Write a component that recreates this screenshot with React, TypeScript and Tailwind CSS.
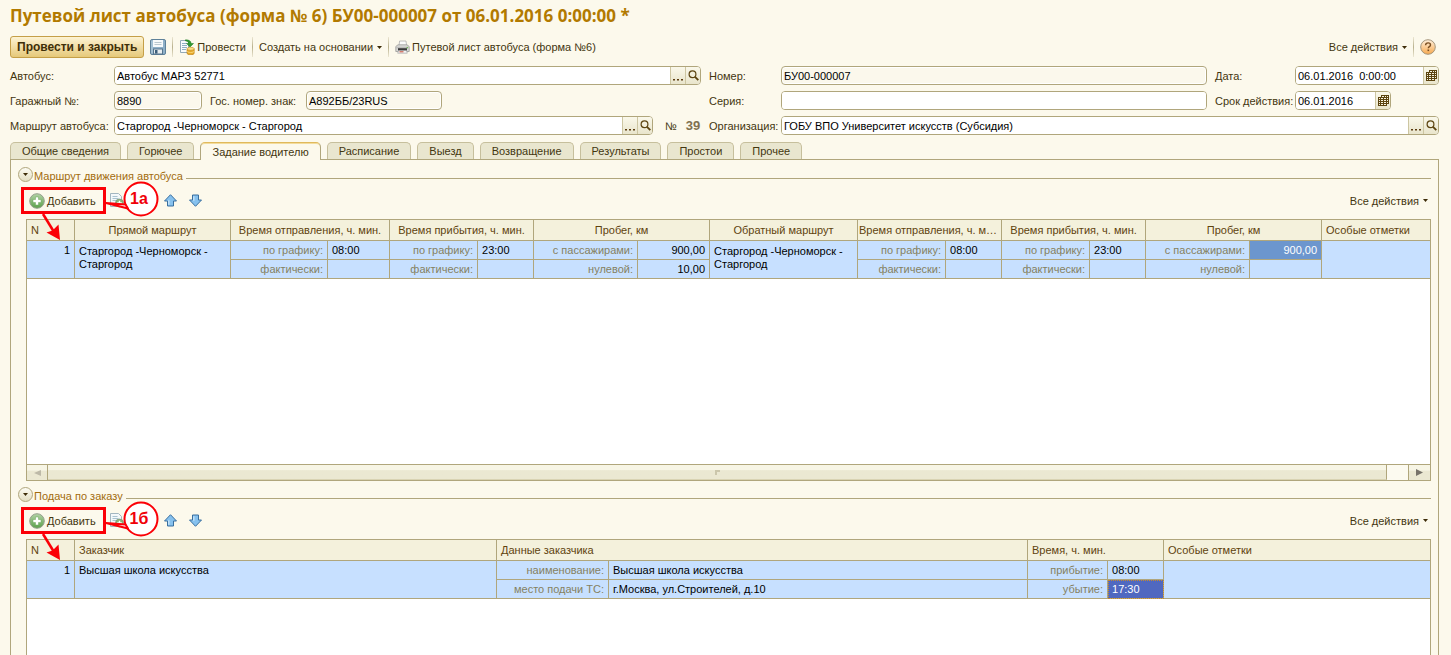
import React, { useState } from "react";

/* ---------- icons ---------- */

function SaveIcon() {
  return (
    <svg width="16" height="16" viewBox="0 0 16 16" aria-hidden="true">
      <rect x="0.5" y="0.5" width="15" height="15" rx="1.5" fill="#8fb0c8" stroke="#5f8199" />
      <rect x="1.5" y="1.5" width="1" height="13" fill="#b7cfdf" />
      <rect x="3" y="1" width="10" height="7" fill="#f7fafb" />
      <path d="M4.5 3.5h7M4.5 5.5h7" stroke="#b9c7cf" />
      <rect x="3.5" y="10" width="9" height="5" fill="#e7edf0" stroke="#56758d" />
      <rect x="5" y="11" width="2.5" height="3.5" fill="#3d5f7b" />
    </svg>
  );
}

function PostIcon() {
  return (
    <svg width="16" height="16" viewBox="0 0 16 16" aria-hidden="true">
      <path d="M1.5 1.5h8v12h-8z" fill="#f8fbfc" stroke="#93aab8" />
      <path d="M3 4.5h5M3 6.5h5M3 8.5h5M3 10.5h4" stroke="#8fb0c4" />
      <path d="M6.5 0.8c3.6 0 5.6 1.2 5.6 3.7h2.4L11 8 7.6 4.5h2c0-1.6-1-2.4-3.1-2.6z" fill="#2e9a2f" stroke="#187518" strokeWidth="0.5" />
      <path d="M8 9.8v4.4c0 .9 1.6 1.6 3.6 1.6s3.6-.7 3.6-1.6V9.8z" fill="#e5a92b" stroke="#b87c14" strokeWidth="0.6" />
      <ellipse cx="11.6" cy="9.8" rx="3.6" ry="1.5" fill="#fbe08a" stroke="#c48a1c" strokeWidth="0.6" />
      <path d="M8 12c0 .9 1.6 1.5 3.6 1.5s3.6-.6 3.6-1.5" fill="none" stroke="#fbe08a" strokeWidth="0.8" />
    </svg>
  );
}

function PrinterIcon() {
  return (
    <svg width="15" height="14" viewBox="0 0 15 14" aria-hidden="true">
      <path d="M4 5.5L4.600 1h6.400l.6 4.500z" fill="#fbfbfb" stroke="#b0b0b0" strokeWidth="0.8" />
      <path d="M0.800 6.500L3 4.800h9l2.200 1.700v5H0.800z" fill="#d9d9d7" stroke="#9b9b98" strokeWidth="0.8" />
      <path d="M1.200 6.800h12.600v1.600H1.200z" fill="#bdbdbb" />
      <path d="M3 8.200h9v2.600H3z" fill="#3a3a3a" />
      <path d="M3.500 10.500h8l.8 2.700H2.700z" fill="#f4f4f4" stroke="#9a9a9a" strokeWidth="0.6" />
      <rect x="4.500" y="11.300" width="4" height="1" fill="#c84a35" />
      <rect x="11.600" y="7.200" width="1.400" height="1" fill="#5bb23f" />
    </svg>
  );
}

function HelpIcon() {
  return (
    <svg width="16" height="16" viewBox="0 0 16 16" aria-hidden="true">
      <defs>
        <linearGradient id="help-fill" x1="0" y1="0" x2="0" y2="1">
          <stop offset="0" stopColor="#fff0dc" />
          <stop offset="1" stopColor="#f7a94f" />
        </linearGradient>
      </defs>
      <circle cx="8" cy="8" r="7.3" fill="url(#help-fill)" stroke="#a5967c" />
      <path d="M5.600 6.200c0-1.500 1-2.300 2.500-2.300s2.400.8 2.400 2c0 1.700-2.200 1.700-2.200 3.300" fill="none" stroke="#7a4f22" strokeWidth="1.4" />
      <rect x="7.500" y="10.500" width="1.600" height="1.600" fill="#7a4f22" />
    </svg>
  );
}

function SearchIcon() {
  return (
    <svg width="11" height="11" viewBox="0 0 11 11" aria-hidden="true">
      <circle cx="4.500" cy="4.300" r="3.400" fill="none" stroke="#5c4410" strokeWidth="1.2" />
      <path d="M7 6.800l3.300 3.400" stroke="#5c4410" strokeWidth="1.8" />
    </svg>
  );
}

function EllipsisIcon() {
  return (
    <svg width="11" height="11" viewBox="0 0 11 11" aria-hidden="true">
      <path d="M0 9h2v1.500H0zM4 9h2v1.500H4zM8 9h2v1.500H8z" fill="#5c3c10" />
    </svg>
  );
}

function CalendarIcon() {
  return (
    <svg width="11" height="11" viewBox="0 0 11 11" aria-hidden="true" shapeRendering="crispEdges">
      <path d="M3 0h8v9H9v2H0V2h3z" fill="#5c4410" />
      <path
        d="M4 1h2v1H4zM7 1h1v1H7zM9 1h1v1H9zM1 3h1v1H1zM3 3h2v1H3zM6 3h2v1H6zM1 5h1v1H1zM3 5h2v1H3zM6 5h2v1H6zM1 7h1v1H1zM3 7h2v1H3zM6 7h2v1H6zM1 9h1v1H1zM3 9h2v1H3zM6 9h2v1H6zM9 3h1v1H9zM9 5h1v1H9zM9 7h1v1H9z"
        fill="#f7f4e2"
      />
    </svg>
  );
}

function AddIcon() {
  return (
    <svg width="16" height="16" viewBox="0 0 16 16" aria-hidden="true">
      <defs>
        <linearGradient id="add-fill" x1="0" y1="0" x2="0" y2="1">
          <stop offset="0" stopColor="#b3d3a6" />
          <stop offset="1" stopColor="#5aa04a" />
        </linearGradient>
      </defs>
      <circle cx="8" cy="8" r="7.3" fill="url(#add-fill)" stroke="#95a08d" />
      <path d="M6.500 4h3v2.500H12v3H9.500V12h-3V9.500H4v-3h2.500z" fill="#fff" stroke="#6aa75b" strokeWidth="0.5" />
    </svg>
  );
}

function CopyIcon() {
  return (
    <svg width="14" height="15" viewBox="0 0 14 15" aria-hidden="true">
      <path d="M0.500 0.500h8l3 3v10h-11z" fill="#f4f8fa" stroke="#a3b6c0" />
      <path d="M2.500 3.500h5M2.500 5.500h6M2.500 7.500h4" stroke="#a9c3d0" />
      <circle cx="9.500" cy="10" r="4" fill="#86b778" stroke="#84967c" strokeWidth="0.8" />
      <path d="M9.500 7.700v4.600M7.200 10h4.600" stroke="#fff" strokeWidth="1.4" />
    </svg>
  );
}

function MoveIcon({ down = false }: { down?: boolean }) {
  return (
    <svg width="13" height="13" viewBox="0 0 13 13" aria-hidden="true">
      <path
        d={down ? "M3.500 1h6v5h3L6.500 12.300 0.500 6h3z" : "M3.500 12h6V7h3L6.500 0.700 0.500 7h3z"}
        fill="#86c1ee"
        stroke="#396f9f"
      />
      <path d={down ? "M4.800 2.200v4.500" : "M4.800 10.800V6.300"} stroke="#cfe9fb" strokeWidth="1.2" />
    </svg>
  );
}

function Caret() {
  return (
    <svg width="5" height="3" viewBox="0 0 5 3" aria-hidden="true">
      <path d="M0 0h5L2.500 3z" fill="#3d2c08" />
    </svg>
  );
}

/* ---------- small parts ---------- */

function Divider() {
  return <span className="h-5 w-px bg-linear-to-b from-[#ece7d3] via-[#b9b18e] to-[#ece7d3]" />;
}

function AllActions() {
  return (
    <button type="button" className="flex items-center gap-1">
      Все действия <Caret />
    </button>
  );
}

type FieldProps = {
  id: string;
  value: string;
  readOnly?: boolean;
  buttons?: "pick" | "date";
  className?: string;
};

function Field({ id, value, readOnly, buttons, className = "w-full" }: FieldProps) {
  const side =
    "flex h-full items-center justify-center border-l border-[#cdc6a2] bg-linear-to-b from-[#faf8ea] to-[#e9e5cc]";
  return (
    <div className={`flex h-[19px] min-w-0 overflow-hidden rounded-[4px] border border-[#b0a67c] bg-white ${className}`}>
      <input
        id={id}
        defaultValue={value}
        readOnly={readOnly}
        className={`min-w-0 flex-1 text-black outline-none ${
          readOnly ? "m-px rounded-[2px] bg-[#fbf8ec] px-px" : "bg-white px-[2px]"
        }`}
      />
      {buttons === "pick" && (
        <>
          <button type="button" aria-label="Выбрать" className={`${side} w-[15px]`}>
            <EllipsisIcon />
          </button>
          <button type="button" aria-label="Открыть" className={`${side} w-[15px]`}>
            <SearchIcon />
          </button>
        </>
      )}
      {buttons === "date" && (
        <button type="button" aria-label="Календарь" className={`${side} w-[15px]`}>
          <CalendarIcon />
        </button>
      )}
    </div>
  );
}

function Callout({ text }: { text: string }) {
  return (
    <svg
      className="pointer-events-none absolute left-0 top-0"
      width="150"
      height="80"
      viewBox="0 0 150 80"
      role="img"
      aria-label={text}
    >
      <rect x="4.500" y="21.500" width="82" height="24" fill="none" stroke="#fb0007" strokeWidth="3" />
      <path d="M25 47L36 65" stroke="#fb0007" strokeWidth="2.5" />
      <path d="M42 73L28.500 65.500L34.500 63.500L40.500 57.500z" fill="#fb0007" />
      <circle cx="123" cy="32" r="16.500" fill="#fff" stroke="#fb0007" strokeWidth="2" />
      <path d="M88 36L107.500 37.500L110 41.500z" fill="#fff" stroke="#fb0007" strokeWidth="2" strokeLinejoin="round" />
      <text
        x="121"
        y="37"
        textAnchor="middle"
        fill="#f00008"
        className="font-['Liberation_Sans',Arial,sans-serif] text-base font-bold"
      >
        {text}
      </text>
    </svg>
  );
}

function Section({
  title,
  callout,
  className = "",
  children,
}: {
  title: string;
  callout: string;
  className?: string;
  children: React.ReactNode;
}) {
  return (
    <section className={`relative flex flex-col ${className}`}>
      <div className="flex h-[15px] items-center gap-px">
        <button
          type="button"
          aria-label="Свернуть"
          className="flex size-[15px] shrink-0 items-center justify-center rounded-full border border-[#b0a67c] bg-linear-to-b from-[#fdfcf4] to-[#e3dec2]"
        >
          <Caret />
        </button>
        <h2 className="mt-[2px] whitespace-nowrap text-[#a26c0e]">{title}</h2>
        <span className="ml-[2px] mt-2 h-px flex-1 bg-[#b0a67c]" />
      </div>
      <div className="flex h-[37px] items-center pl-[11px]">
        <button type="button" className="flex items-center gap-[2px]">
          <AddIcon />
          Добавить
        </button>
        <button type="button" aria-label="Скопировать" className="ml-[14px]">
          <CopyIcon />
        </button>
        <button type="button" aria-label="Переместить вверх" className="ml-[40px]">
          <MoveIcon />
        </button>
        <button type="button" aria-label="Переместить вниз" className="ml-3">
          <MoveIcon down />
        </button>
        <div className="ml-auto pr-[3px]">
          <AllActions />
        </div>
      </div>
      {children}
      <Callout text={callout} />
    </section>
  );
}

/* ---------- tables ---------- */

const cell = "border-b border-r border-[#b0a67c] px-1 align-top";
const lastCell = "border-b border-[#b0a67c] px-1 align-top";
const head = "border-b border-r border-[#b0a67c] px-1 font-normal";
const groupHead = "truncate border-b border-r border-[#b0a67c] px-px font-normal";
const lastHead = "border-b border-[#b0a67c] px-1 font-normal";

function Hint({ children }: { children: React.ReactNode }) {
  return (
    <th scope="row" className={`${cell} whitespace-nowrap pt-px text-right font-normal leading-[17px] text-[#85805f]`}>
      {children}
    </th>
  );
}

function Value({
  children,
  right,
  tone = "plain",
}: {
  children?: React.ReactNode;
  right?: boolean;
  tone?: "plain" | "selected" | "focused";
}) {
  const tones = {
    plain: "",
    selected: "bg-[#6c96ce] text-white",
    focused: "bg-[#5068c0] text-white outline-1 -outline-offset-1 outline-dotted outline-[#c88a2c]",
  };
  return (
    <td className={`${cell} pt-px leading-[17px] ${right ? "text-right" : ""} ${tones[tone]}`}>{children}</td>
  );
}

function RouteTable() {
  return (
    <table className="w-full table-fixed border-separate border-spacing-0">
      <colgroup>
        <col className="w-[48px]" />
        <col className="w-[156px]" />
        <col className="w-[97px]" />
        <col className="w-[62px]" />
        <col className="w-[88px]" />
        <col className="w-[56px]" />
        <col className="w-[104px]" />
        <col className="w-[72px]" />
        <col className="w-[148px]" />
        <col className="w-[88px]" />
        <col className="w-[56px]" />
        <col className="w-[88px]" />
        <col className="w-[56px]" />
        <col className="w-[104px]" />
        <col className="w-[72px]" />
        <col />
      </colgroup>
      <thead>
        <tr className="h-[21px] bg-[#f4f1dc] text-[#5f430e]">
          <th className={`${head} text-left`}>N</th>
          <th className={groupHead}>Прямой маршрут</th>
          <th colSpan={2} className={groupHead}>Время отправления, ч. мин.</th>
          <th colSpan={2} className={groupHead}>Время прибытия, ч. мин.</th>
          <th colSpan={2} className={groupHead}>Пробег, км</th>
          <th className={groupHead}>Обратный маршрут</th>
          <th colSpan={2} className={groupHead}>Время отправления, ч. мин.</th>
          <th colSpan={2} className={groupHead}>Время прибытия, ч. мин.</th>
          <th colSpan={2} className={groupHead}>Пробег, км</th>
          <th className={`${lastHead} text-left`}>Особые отметки</th>
        </tr>
      </thead>
      <tbody className="bg-[#c7e0ff] text-black">
        <tr className="h-[19px]">
          <td rowSpan={2} className={`${cell} pt-px text-right leading-[17px]`}>1</td>
          <td rowSpan={2} className={`${cell} pt-1 leading-[13px]`}>Старгород -Черноморск - Старгород</td>
          <Hint>по графику:</Hint>
          <Value>08:00</Value>
          <Hint>по графику:</Hint>
          <Value>23:00</Value>
          <Hint>с пассажирами:</Hint>
          <Value right>900,00</Value>
          <td rowSpan={2} className={`${cell} pt-1 leading-[13px]`}>Старгород -Черноморск - Старгород</td>
          <Hint>по графику:</Hint>
          <Value>08:00</Value>
          <Hint>по графику:</Hint>
          <Value>23:00</Value>
          <Hint>с пассажирами:</Hint>
          <Value right tone="selected">900,00</Value>
          <td rowSpan={2} className={lastCell} />
        </tr>
        <tr className="h-[19px]">
          <Hint>фактически:</Hint>
          <Value />
          <Hint>фактически:</Hint>
          <Value />
          <Hint>нулевой:</Hint>
          <Value right>10,00</Value>
          <Hint>фактически:</Hint>
          <Value />
          <Hint>фактически:</Hint>
          <Value />
          <Hint>нулевой:</Hint>
          <Value />
        </tr>
      </tbody>
    </table>
  );
}

function OrdersTable() {
  return (
    <table className="w-full table-fixed border-separate border-spacing-0">
      <colgroup>
        <col className="w-[48px]" />
        <col className="w-[422px]" />
        <col className="w-[112px]" />
        <col className="w-[419px]" />
        <col className="w-[80px]" />
        <col className="w-[56px]" />
        <col />
      </colgroup>
      <thead>
        <tr className="h-[21px] bg-[#f4f1dc] text-left text-[#5f430e]">
          <th className={head}>N</th>
          <th className={head}>Заказчик</th>
          <th colSpan={2} className={head}>Данные заказчика</th>
          <th colSpan={2} className={head}>Время, ч. мин.</th>
          <th className={lastHead}>Особые отметки</th>
        </tr>
      </thead>
      <tbody className="bg-[#c7e0ff] text-black">
        <tr className="h-[19px]">
          <td rowSpan={2} className={`${cell} pt-px text-right leading-[17px]`}>1</td>
          <td rowSpan={2} className={`${cell} pt-px leading-[17px]`}>Высшая школа искусства</td>
          <Hint>наименование:</Hint>
          <Value>Высшая школа искусства</Value>
          <Hint>прибытие:</Hint>
          <Value>08:00</Value>
          <td rowSpan={2} className={lastCell} />
        </tr>
        <tr className="h-[19px]">
          <Hint>место подачи ТС:</Hint>
          <Value>г.Москва, ул.Строителей, д.10</Value>
          <Hint>убытие:</Hint>
          <Value tone="focused">17:30</Value>
        </tr>
      </tbody>
    </table>
  );
}

function ScrollBar() {
  const face = "bg-linear-to-b from-[#f7f5e5] from-35% to-[#ebe8d2] to-40%";
  return (
    <div className="mt-auto flex h-4 border-t border-[#b0a67c] bg-[#fcfaf0]">
      <button type="button" aria-label="Прокрутить влево" className={`flex w-[21px] items-center justify-center border-r border-[#b0a67c] ${face}`}>
        <svg width="7" height="6" viewBox="0 0 7 6" aria-hidden="true">
          <path d="M7 0v6L0 3z" fill="#bdb9a8" />
        </svg>
      </button>
      <div className={`flex flex-1 items-center justify-center border-b border-r border-b-[#d9d3b3] border-r-[#b0a67c] ${face}`}>
        <svg width="5" height="5" viewBox="0 0 5 5" aria-hidden="true">
          <path d="M0 0h5v2H2v3H0z" fill="#cbc6ab" />
        </svg>
      </div>
      <div className="w-[21px]" />
      <button type="button" aria-label="Прокрутить вправо" className={`flex w-[22px] items-center justify-center border-l border-[#b0a67c] ${face}`}>
        <svg width="7" height="7" viewBox="0 0 7 7" aria-hidden="true">
          <path d="M0 0v7L7 3.500z" fill="#77736a" />
        </svg>
      </button>
    </div>
  );
}

/* ---------- page ---------- */

const tabs = [
  "Общие сведения",
  "Горючее",
  "Задание водителю",
  "Расписание",
  "Выезд",
  "Возвращение",
  "Результаты",
  "Простои",
  "Прочее",
];

export default function App() {
  const [active, setActive] = useState(2);

  return (
    <main className="flex h-screen flex-col overflow-hidden bg-[#fcf9ec] pl-[10px] pr-3 font-['Liberation_Sans',Arial,sans-serif] text-[11px] leading-[14px] text-[#43360f]">
      <h1 className="h-9 shrink-0 font-['Open_Sans',Tahoma,sans-serif] text-[17px] font-bold leading-8 text-[#b27a00]">
        Путевой лист автобуса (форма № 6) БУ00-000007 от 06.01.2016 0:00:00 *
      </h1>

      <div className="flex h-[22px] shrink-0 items-center gap-1.5 whitespace-nowrap">
        <button
          type="button"
          className="h-full rounded-[3px] border border-[#c59f47] bg-linear-to-b from-[#fdf3d2] to-[#e6c979] px-1.5 text-xs font-bold text-[#3f2f08]"
        >
          Провести и закрыть
        </button>
        <button type="button" aria-label="Записать">
          <SaveIcon />
        </button>
        <Divider />
        <button type="button" className="flex items-center gap-[2px]">
          <PostIcon />
          Провести
        </button>
        <Divider />
        <button type="button" className="flex items-center gap-1">
          Создать на основании <Caret />
        </button>
        <Divider />
        <button type="button" className="flex items-center gap-[2px]">
          <PrinterIcon />
          Путевой лист автобуса (форма №6)
        </button>
        <div className="ml-auto flex items-center gap-1.5 pr-[3px]">
          <AllActions />
          <Divider />
          <button type="button" aria-label="Справка">
            <HelpIcon />
          </button>
        </div>
      </div>

      <form className="mt-2 grid shrink-0 grid-cols-[104px_minmax(0,587fr)_80px_minmax(0,426fr)_88px_144px] items-center gap-y-1.5 whitespace-nowrap">
        <label htmlFor="bus">Автобус:</label>
        <Field id="bus" value="Автобус МАРЗ 52771" buttons="pick" />
        <label htmlFor="number" className="pl-2">Номер:</label>
        <Field id="number" value="БУ00-000007" readOnly />
        <label htmlFor="date" className="pl-2">Дата:</label>
        <Field id="date" value="06.01.2016  0:00:00" buttons="date" />

        <label htmlFor="garage">Гаражный №:</label>
        <div className="flex items-center">
          <Field id="garage" value="8890" readOnly className="w-[88px]" />
          <label htmlFor="plate" className="w-[104px] pl-2">Гос. номер. знак:</label>
          <Field id="plate" value="А892ББ/23RUS" readOnly className="w-[136px]" />
        </div>
        <label htmlFor="series" className="pl-2">Серия:</label>
        <Field id="series" value="" />
        <label htmlFor="term" className="pl-2">Срок действия:</label>
        <Field id="term" value="06.01.2016" buttons="date" className="w-24" />

        <label htmlFor="route">Маршрут автобуса:</label>
        <div className="flex items-center">
          <Field id="route" value="Старгород -Черноморск - Старгород" buttons="pick" className="flex-1" />
          <span className="w-12 pl-3">
            № <b className="ml-1.5 text-[13px] text-[#80704f]">39</b>
          </span>
        </div>
        <label htmlFor="org" className="pl-2">Организация:</label>
        <div className="col-span-3">
          <Field id="org" value="ГОБУ ВПО Университет искусств (Субсидия)" buttons="pick" />
        </div>
      </form>

      <div role="tablist" className="mt-[7px] flex h-[17px] shrink-0 gap-1.5">
        {tabs.map((name, i) => (
          <button
            key={name}
            type="button"
            role="tab"
            aria-selected={i === active}
            onClick={() => setActive(i)}
            className={
              i === active
                ? "relative z-10 h-[18px] whitespace-nowrap rounded-t-[5px] border border-b-0 border-[#b0a67c] border-t-[#e0b95c] bg-[#fcf9ec] px-[11px] shadow-[inset_0_1px_0_#f3dc9c]"
                : "h-[17px] whitespace-nowrap rounded-t-[5px] border border-b-0 border-[#c6bf9c] bg-[#e9e6cf] px-[11px]"
            }
          >
            {name}
          </button>
        ))}
      </div>

      <div role="tabpanel" className="flex min-h-0 flex-1 flex-col gap-1.5 border border-b-0 border-[#b0a67c] px-[7px] pt-[7px]">
        <Section title="Маршрут движения автобуса" callout="1а" className="shrink-0">
          <div className="ml-2 flex min-h-[262px] flex-col border border-[#b0a67c] bg-white">
            <RouteTable />
            <ScrollBar />
          </div>
        </Section>
        <Section title="Подача по заказу" callout="1б" className="min-h-0 flex-1">
          <div className="ml-2 flex-1 border border-b-0 border-[#b0a67c] bg-white">
            <OrdersTable />
          </div>
        </Section>
      </div>
    </main>
  );
}
